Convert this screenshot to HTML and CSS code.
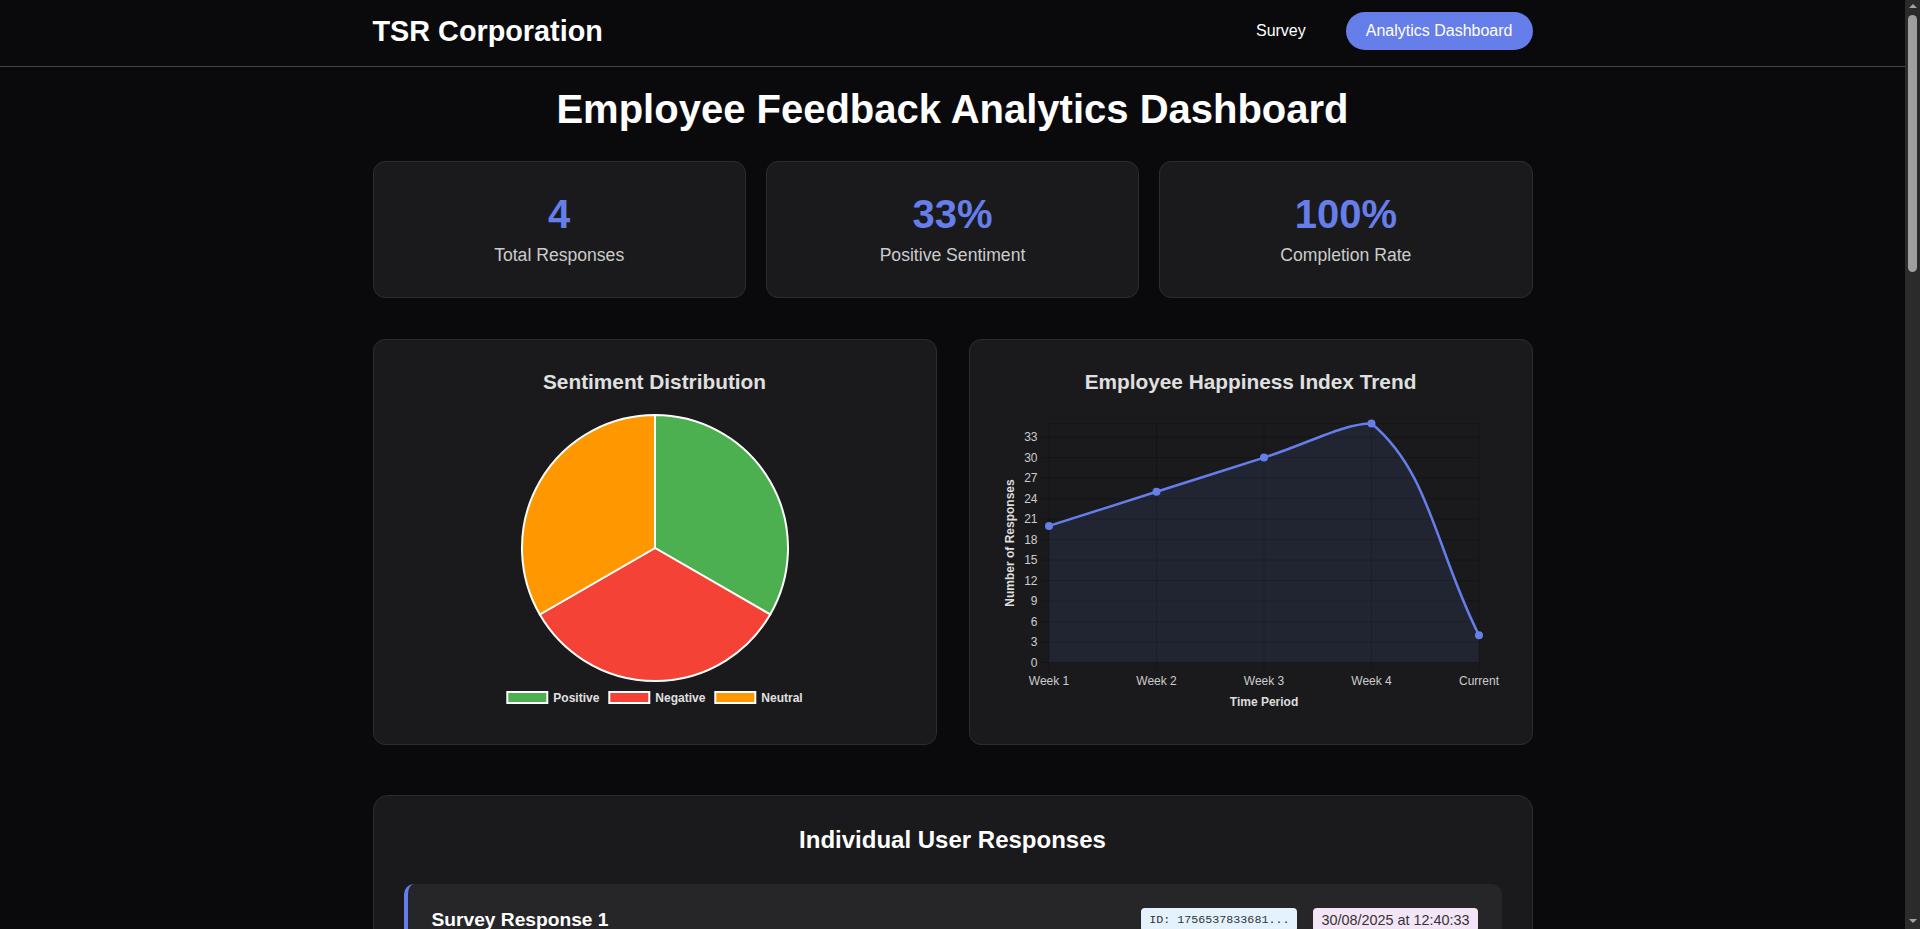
FILE: index.html
```html
<!DOCTYPE html>
<html lang="en">
<head>
<meta charset="utf-8">
<title>TSR Corporation - Analytics Dashboard</title>
<link rel="stylesheet" href="styles.css">
</head>
<body>
<header class="site-header">
  <div class="header-inner">
    <div class="brand">TSR Corporation</div>
    <nav class="nav">
      <a class="nav-link" href="#">Survey</a>
      <a class="nav-link active" href="#">Analytics Dashboard</a>
    </nav>
  </div>
</header>

<main class="container">
  <h1 class="page-title">Employee Feedback Analytics Dashboard</h1>

  <section class="stats">
    <div class="stat-card">
      <div class="stat-value">4</div>
      <div class="stat-label">Total Responses</div>
    </div>
    <div class="stat-card">
      <div class="stat-value">33%</div>
      <div class="stat-label">Positive Sentiment</div>
    </div>
    <div class="stat-card">
      <div class="stat-value">100%</div>
      <div class="stat-label">Completion Rate</div>
    </div>
  </section>

  <section class="charts">
    <div class="chart-card">
      <h3 class="chart-title">Sentiment Distribution</h3>
      <svg class="chart-svg" viewBox="0 0 502 300" width="502" height="300">
        <path class="slice" fill="#4caf50" d="M251,134 L251,1 A133,133 0 0 1 366.18,200.5 Z"/>
        <path class="slice" fill="#f44336" d="M251,134 L366.18,200.5 A133,133 0 0 1 135.82,200.5 Z"/>
        <path class="slice" fill="#ff9800" d="M251,134 L135.82,200.5 A133,133 0 0 1 251,1 Z"/>
        <rect class="legend-box" x="103.3" y="278" width="40" height="11" fill="#4caf50"/>
        <text class="legend-text" x="149.3" y="287.5">Positive</text>
        <rect class="legend-box" x="205.3" y="278" width="40" height="11" fill="#f44336"/>
        <text class="legend-text" x="251.3" y="287.5">Negative</text>
        <rect class="legend-box" x="311.3" y="278" width="40" height="11" fill="#ff9800"/>
        <text class="legend-text" x="357.3" y="287.5">Neutral</text>
      </svg>
    </div>

    <div class="chart-card">
      <h3 class="chart-title">Employee Happiness Index Trend</h3>
      <svg class="chart-svg" viewBox="0 0 502 300" width="502" height="300">
        <g class="grid">
          <line x1="41" y1="248.5" x2="479" y2="248.5"/>
          <line x1="41" y1="228" x2="479" y2="228"/>
          <line x1="41" y1="207.5" x2="479" y2="207.5"/>
          <line x1="41" y1="187" x2="479" y2="187"/>
          <line x1="41" y1="166.6" x2="479" y2="166.6"/>
          <line x1="41" y1="146.1" x2="479" y2="146.1"/>
          <line x1="41" y1="125.6" x2="479" y2="125.6"/>
          <line x1="41" y1="105.1" x2="479" y2="105.1"/>
          <line x1="41" y1="84.6" x2="479" y2="84.6"/>
          <line x1="41" y1="64.1" x2="479" y2="64.1"/>
          <line x1="41" y1="43.6" x2="479" y2="43.6"/>
          <line x1="41" y1="23.1" x2="479" y2="23.1"/>
          <line x1="49" y1="9.5" x2="479" y2="9.5"/>
          <line x1="49" y1="9.5" x2="49" y2="256.5"/>
          <line x1="156.5" y1="9.5" x2="156.5" y2="256.5"/>
          <line x1="264" y1="9.5" x2="264" y2="256.5"/>
          <line x1="371.5" y1="9.5" x2="371.5" y2="256.5"/>
          <line x1="479" y1="9.5" x2="479" y2="256.5"/>
        </g>
        <path class="area" d="M49,111.9 C92,98.26 113.5,91.46 156.5,77.8 C200,64.14 221,57.26 264,43.6 C307,29.94 343.8,9.5 371.5,9.5 C429.8,57.67 436,136.52 479,221.2 L479,248.5 L49,248.5 Z"/>
        <path class="trend" d="M49,111.9 C92,98.26 113.5,91.46 156.5,77.8 C200,64.14 221,57.26 264,43.6 C307,29.94 343.8,9.5 371.5,9.5 C429.8,57.67 436,136.52 479,221.2"/>
        <g class="points">
          <circle cx="49" cy="111.9" r="4"/>
          <circle cx="156.5" cy="77.8" r="4"/>
          <circle cx="264" cy="43.6" r="4"/>
          <circle cx="371.5" cy="9.5" r="4"/>
          <circle cx="479" cy="221.2" r="4"/>
        </g>
        <g class="tick-y">
          <text x="37.5" y="252.8">0</text>
          <text x="37.5" y="232.3">3</text>
          <text x="37.5" y="211.8">6</text>
          <text x="37.5" y="191.3">9</text>
          <text x="37.5" y="170.9">12</text>
          <text x="37.5" y="150.4">15</text>
          <text x="37.5" y="129.9">18</text>
          <text x="37.5" y="109.4">21</text>
          <text x="37.5" y="88.9">24</text>
          <text x="37.5" y="68.4">27</text>
          <text x="37.5" y="47.9">30</text>
          <text x="37.5" y="27.4">33</text>
        </g>
        <g class="tick-x">
          <text x="49" y="270.7">Week 1</text>
          <text x="156.5" y="270.7">Week 2</text>
          <text x="264" y="270.7">Week 3</text>
          <text x="371.5" y="270.7">Week 4</text>
          <text x="479" y="270.7">Current</text>
        </g>
        <text class="axis-title" x="264" y="291.7">Time Period</text>
        <text class="axis-title" transform="translate(14,129) rotate(-90)">Number of Responses</text>
      </svg>
    </div>
  </section>

  <section class="responses">
    <h2 class="responses-title">Individual User Responses</h2>

    <article class="response-card">
      <div class="response-header">
        <h4 class="response-title">Survey Response 1</h4>
        <div class="response-meta">
          <span class="badge badge-id">ID: 1756537833681...</span>
          <span class="badge badge-date">30/08/2025 at 12:40:33</span>
        </div>
      </div>
      <div class="response-body">
        <div class="qa"><div class="question">How satisfied are you with your current role?</div><div class="answer">Very satisfied</div></div>
        <div class="qa"><div class="question">How would you rate communication within your team?</div><div class="answer">Good</div></div>
        <div class="qa"><div class="question">Do you feel recognized for your contributions?</div><div class="answer">Yes, most of the time</div></div>
        <div class="qa"><div class="question">How would you describe your work-life balance?</div><div class="answer">Balanced</div></div>
        <div class="qa"><div class="question">Any additional comments?</div><div class="answer">The team is supportive and the projects are interesting.</div></div>
      </div>
    </article>

    <article class="response-card">
      <div class="response-header">
        <h4 class="response-title">Survey Response 2</h4>
        <div class="response-meta">
          <span class="badge badge-id">ID: 1756537791204...</span>
          <span class="badge badge-date">30/08/2025 at 12:39:51</span>
        </div>
      </div>
      <div class="response-body">
        <div class="qa"><div class="question">How satisfied are you with your current role?</div><div class="answer">Dissatisfied</div></div>
        <div class="qa"><div class="question">How would you rate communication within your team?</div><div class="answer">Poor</div></div>
        <div class="qa"><div class="question">Do you feel recognized for your contributions?</div><div class="answer">Rarely</div></div>
        <div class="qa"><div class="question">How would you describe your work-life balance?</div><div class="answer">Overworked</div></div>
        <div class="qa"><div class="question">Any additional comments?</div><div class="answer">Deadlines are often unrealistic.</div></div>
      </div>
    </article>

    <article class="response-card">
      <div class="response-header">
        <h4 class="response-title">Survey Response 3</h4>
        <div class="response-meta">
          <span class="badge badge-id">ID: 1756537745530...</span>
          <span class="badge badge-date">30/08/2025 at 12:39:05</span>
        </div>
      </div>
      <div class="response-body">
        <div class="qa"><div class="question">How satisfied are you with your current role?</div><div class="answer">Neutral</div></div>
        <div class="qa"><div class="question">How would you rate communication within your team?</div><div class="answer">Average</div></div>
        <div class="qa"><div class="question">Do you feel recognized for your contributions?</div><div class="answer">Sometimes</div></div>
        <div class="qa"><div class="question">How would you describe your work-life balance?</div><div class="answer">Acceptable</div></div>
        <div class="qa"><div class="question">Any additional comments?</div><div class="answer">No further comments.</div></div>
      </div>
    </article>

    <article class="response-card">
      <div class="response-header">
        <h4 class="response-title">Survey Response 4</h4>
        <div class="response-meta">
          <span class="badge badge-id">ID: 1756537702118...</span>
          <span class="badge badge-date">30/08/2025 at 12:38:22</span>
        </div>
      </div>
      <div class="response-body">
        <div class="qa"><div class="question">How satisfied are you with your current role?</div><div class="answer">Satisfied</div></div>
        <div class="qa"><div class="question">How would you rate communication within your team?</div><div class="answer">Good</div></div>
        <div class="qa"><div class="question">Do you feel recognized for your contributions?</div><div class="answer">Sometimes</div></div>
        <div class="qa"><div class="question">How would you describe your work-life balance?</div><div class="answer">Balanced</div></div>
        <div class="qa"><div class="question">Any additional comments?</div><div class="answer">More training opportunities would be welcome.</div></div>
      </div>
    </article>
  </section>
</main>

<div class="scrollbar" aria-hidden="true">
  <div class="sb-arrow sb-up"><span class="tri-up"></span></div>
  <div class="sb-track"><div class="sb-thumb"></div></div>
  <div class="sb-arrow sb-down"><span class="tri-down"></span></div>
</div>
</body>
</html>
```

FILE: styles.css
```css
html {
  color-scheme: dark;
}

* {
  box-sizing: border-box;
}

body {
  margin: 0 15px 0 0;
  background: #0a0a0c;
  color: #ffffff;
  font-family: "Liberation Sans", Arial, sans-serif;
}

/* Header */
.site-header {
  background: #0a0a0c;
  border-bottom: 1px solid #444446;
}

.header-inner {
  max-width: 1160px;
  margin: 0 auto;
  display: flex;
  justify-content: space-between;
  align-items: center;
  padding: 12px 0 16px;
}

.brand {
  font-size: 28.8px;
  font-weight: 700;
  color: #ffffff;
}

.nav {
  display: flex;
  align-items: center;
  gap: 20px;
}

.nav-link {
  color: #ffffff;
  text-decoration: none;
  font-size: 16px;
  padding: 10px 20px;
  border-radius: 25px;
}

.nav-link.active {
  background: #667eea;
}

/* Main */
.container {
  max-width: 1160px;
  margin: 0 auto;
  padding: 20px 0 40px;
}

.page-title {
  font-size: 40px;
  font-weight: 700;
  text-align: center;
  margin: 0 0 29px;
  color: #ffffff;
}

/* Stats */
.stats {
  display: grid;
  grid-template-columns: repeat(3, 1fr);
  gap: 20px;
  margin-bottom: 41px;
}

.stat-card {
  background: #1a1a1c;
  border: 1px solid #2c2c2e;
  border-radius: 12px;
  padding: 30px 20px 31px;
  text-align: center;
}

.stat-value {
  font-size: 40px;
  font-weight: 700;
  color: #667eea;
  margin-bottom: 8px;
}

.stat-label {
  font-size: 17.6px;
  color: #cccccc;
}

/* Charts */
.charts {
  display: grid;
  grid-template-columns: 1fr 1fr;
  gap: 32px;
  margin-bottom: 50px;
}

.chart-card {
  background: #1a1a1c;
  border: 1px solid #2c2c2e;
  border-radius: 12px;
  padding: 30px;
}

.chart-title {
  font-size: 20.8px;
  font-weight: 700;
  color: #e0e0e0;
  text-align: center;
  margin: 0 0 20px;
}

.chart-svg {
  display: block;
  width: 100%;
  height: 300px;
  font-family: "Liberation Sans", Arial, sans-serif;
}

.slice {
  stroke: #ffffff;
  stroke-width: 2;
  stroke-linejoin: round;
}

.legend-box {
  stroke: #ffffff;
  stroke-width: 2;
}

.legend-text {
  font-size: 12px;
  font-weight: 700;
  fill: #e0e0e0;
}

.grid line {
  stroke: rgba(0, 0, 0, 0.2);
  stroke-width: 1;
}

.area {
  fill: rgba(102, 126, 234, 0.1);
  stroke: none;
}

.trend {
  fill: none;
  stroke: #667eea;
  stroke-width: 2.5;
}

.points circle {
  fill: #667eea;
}

.tick-y text {
  font-size: 12px;
  fill: #cccccc;
  text-anchor: end;
}

.tick-x text {
  font-size: 12px;
  fill: #cccccc;
  text-anchor: middle;
}

.axis-title {
  font-size: 12px;
  font-weight: 700;
  fill: #dddddd;
  text-anchor: middle;
}

/* Responses */
.responses {
  background: #1a1a1c;
  border: 1px solid #2c2c2e;
  border-radius: 15px;
  padding: 30px;
}

.responses-title {
  font-size: 24px;
  font-weight: 700;
  text-align: center;
  color: #ffffff;
  margin: 0 0 30px;
}

.response-card {
  background: #262628;
  border-left: 4px solid #667eea;
  border-radius: 10px;
  padding: 24px;
  margin-bottom: 20px;
}

.response-card:last-child {
  margin-bottom: 0;
}

.response-header {
  display: flex;
  justify-content: space-between;
  align-items: center;
  margin-bottom: 20px;
}

.response-title {
  font-size: 19.2px;
  font-weight: 700;
  color: #ffffff;
  margin: 0;
}

.response-meta {
  display: flex;
  align-items: center;
  gap: 16px;
}

.badge {
  border-radius: 4px;
  padding: 4px 8px;
  color: #333333;
}

.badge-id {
  background: #e3f2fd;
  font-family: "Liberation Mono", monospace;
  font-size: 11.7px;
  padding: 5px 8px;
}

.badge-date {
  background: #f3e5f5;
  font-size: 14.4px;
}

.response-body {
  display: flex;
  flex-direction: column;
  gap: 14px;
}

.qa {
  background: #1f1f21;
  border-radius: 8px;
  padding: 16px 18px;
}

.question {
  font-size: 15px;
  font-weight: 700;
  color: #b8b8c8;
  margin-bottom: 8px;
}

.answer {
  font-size: 16px;
  color: #e0e0e0;
  line-height: 1.5;
}

/* Window scrollbar (drawn, since the capture hides native scrollbars) */
.scrollbar {
  position: fixed;
  top: 0;
  right: 0;
  width: 15px;
  height: 100vh;
  background: #2b2b2b;
  display: flex;
  flex-direction: column;
  align-items: center;
}

.sb-arrow {
  width: 15px;
  display: flex;
  justify-content: center;
  align-items: center;
}

.sb-up {
  height: 11px;
}

.sb-down {
  height: 16px;
}

.tri-up {
  width: 0;
  height: 0;
  border-left: 4px solid transparent;
  border-right: 4px solid transparent;
  border-bottom: 4px solid #a3a3a3;
}

.tri-down {
  width: 0;
  height: 0;
  border-left: 4px solid transparent;
  border-right: 4px solid transparent;
  border-top: 4px solid #a3a3a3;
}

.sb-track {
  flex: 1;
  width: 15px;
  display: flex;
  justify-content: center;
  padding-top: 4px;
}

.sb-thumb {
  width: 9px;
  height: 257px;
  border-radius: 5px;
  background: #9f9f9f;
}
```
